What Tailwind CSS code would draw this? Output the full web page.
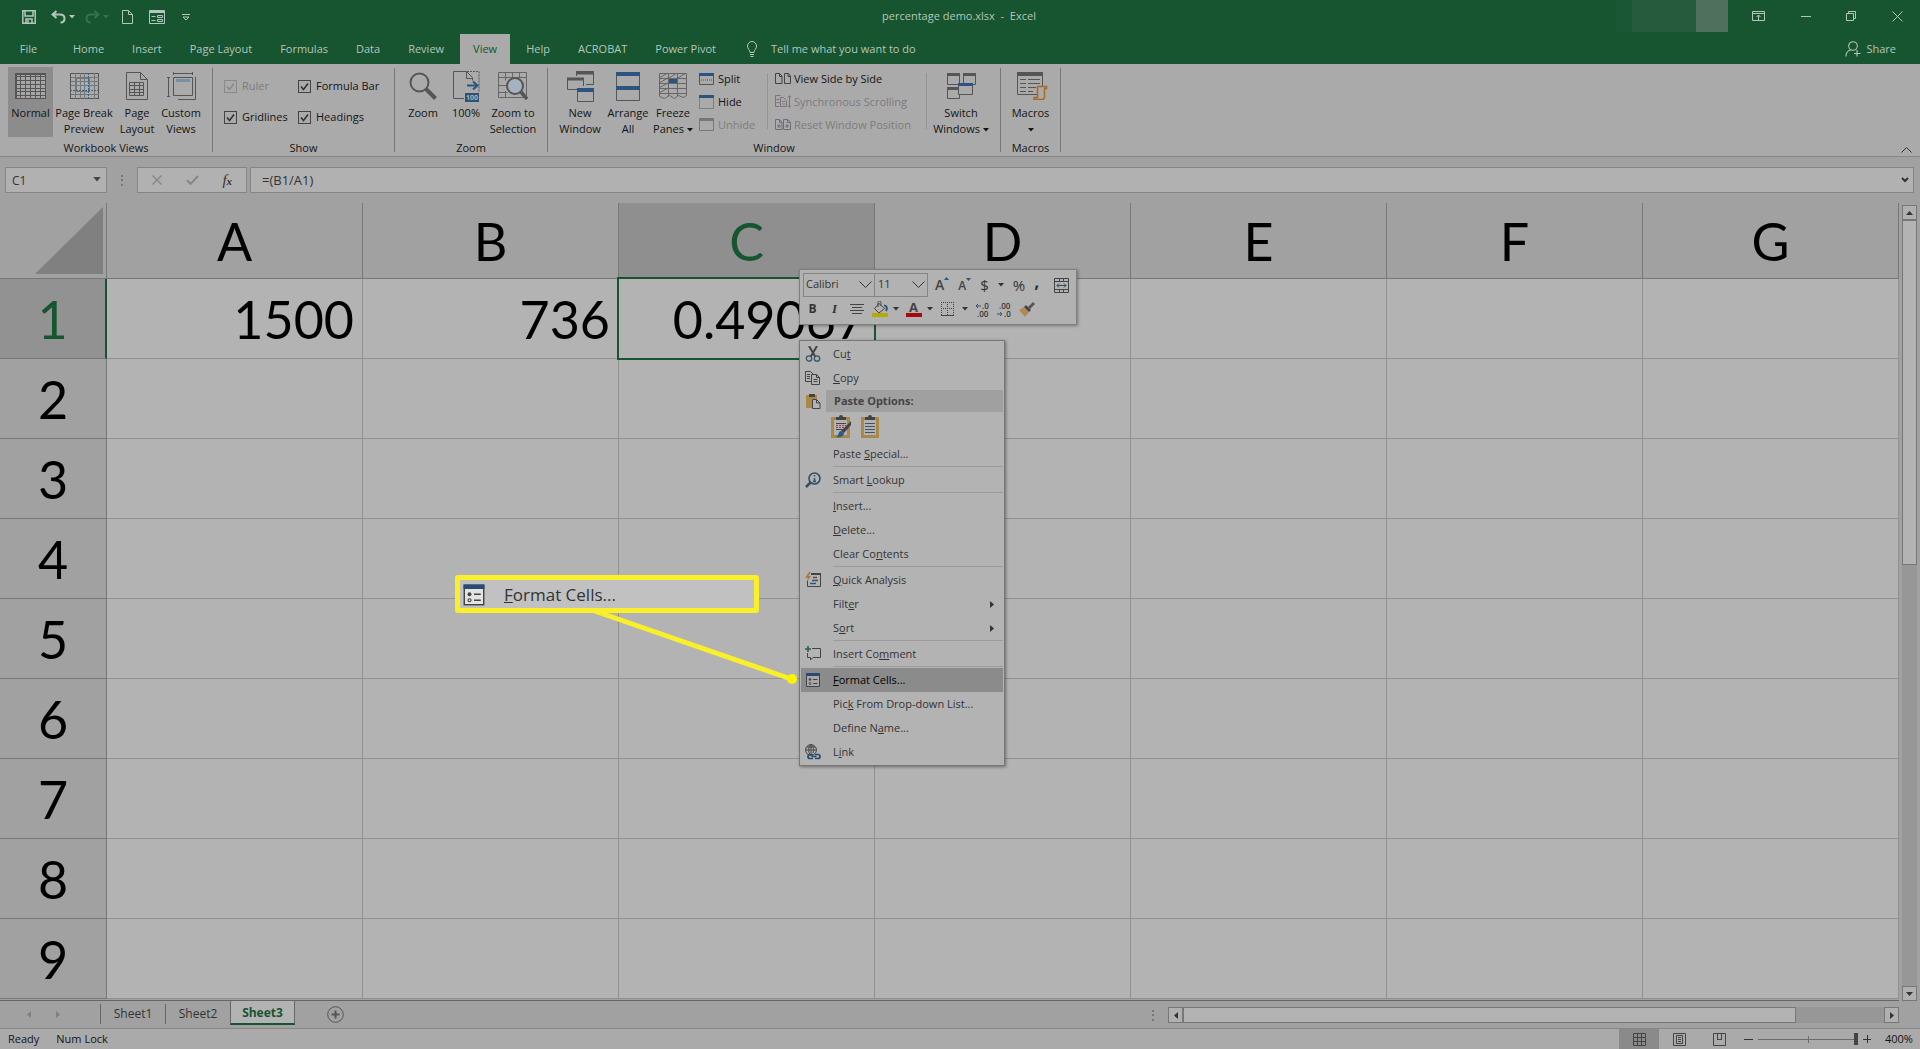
<!DOCTYPE html>
<html lang="en">
<head>
<meta charset="utf-8">
<title>percentage demo.xlsx - Excel</title>
<script src="https://cdn.jsdelivr.net/npm/@tailwindcss/browser@4"></script>
</head>
<body class="relative flex h-screen flex-col overflow-hidden bg-[#a1a1a1] font-['Open_Sans','Noto_Sans',sans-serif] text-[11px] leading-4 text-[#141414]">

<!-- shared symbols -->
<svg class="hidden">
  <symbol id="caret" viewBox="0 0 6 4"><path d="M0 0h6L3 3.5z" fill="currentColor"/></symbol>
  <symbol id="tick" viewBox="0 0 13 13"><path d="M3 6.5l2.5 3L10 3.5" fill="none" stroke="currentColor" stroke-width="1.6"/></symbol>
  <symbol id="format" viewBox="0 0 16 16"><path d="M1.5 1.5h13v13h-13z" fill="none" stroke="#444"/><path d="M1 1h14v3H1z" fill="#2b4a73"/><circle cx="5" cy="7.5" r="1.3" fill="#444"/><circle cx="5" cy="11.5" r="1" fill="none" stroke="#444" stroke-width=".8"/><path d="M8 7.5h4.500M8 11.500h4.500" stroke="#444"/></symbol>
</svg>

<header class="bg-[#175430] text-[#b4c6bb]">
  <div class="flex h-[34px] items-start">
    <div class="flex h-8 flex-1 items-center pl-[22px] pt-[2px]">
      <button aria-label="Save" class="mr-[15px]"><svg class="size-[14px]" viewBox="0 0 14 14" fill="none" stroke="currentColor" stroke-width="1.5"><path d="M.8.8h12.400v12.400H.8z"/><path d="M3 1v5h8V1M4 13V9h6v4"/><path d="M6 10v3" /></svg></button>
      <button aria-label="Undo" class="flex items-center"><svg class="h-[14px] w-[15px]" viewBox="0 0 15 14" fill="none" stroke="currentColor" stroke-width="2"><path d="M5.500 1L1.500 4.500l4 3.500M2 4.500h7c3 0 4.500 1.800 4.500 4s-1.500 4-4 4"/></svg><svg class="ml-[3px] h-1 w-1.5"><use href="#caret"/></svg></button>
      <button aria-label="Redo" disabled class="ml-[10px] flex items-center text-[#37704d]"><svg class="h-[14px] w-[15px]" viewBox="0 0 15 14" fill="none" stroke="currentColor" stroke-width="2"><path d="M9.500 1l4 3.500-4 3.500M13 4.500H6c-3 0-4.500 1.800-4.500 4s1.500 4 4 4"/></svg><svg class="ml-[3px] h-1 w-1.5"><use href="#caret"/></svg></button>
      <button aria-label="New" class="ml-[13px]"><svg class="h-[14px] w-[11px]" viewBox="0 0 11 14" fill="none" stroke="currentColor"><path d="M.5.5h6l4 4v9H.5zM6.500.5v4h4"/></svg></button>
      <button aria-label="Form" class="ml-4"><svg class="h-[14px] w-4" viewBox="0 0 16 14" fill="none" stroke="currentColor"><path d="M.5.5h15v13H.5z"/><path d="M1 2h14" stroke-width="2"/><path d="M2.500 6.500h4M2.500 10.500h4M8.500 5.500h5v2h-5zM8.500 9.500h5v2h-5z"/></svg></button>
      <button aria-label="Customize toolbar" class="ml-[17px]"><svg class="h-[7px] w-[8px]" viewBox="0 0 8 7" fill="none" stroke="currentColor"><path d="M0 .5h8M1 3l3 3 3-3z"/></svg></button>
    </div>
    <div class="flex h-8 items-center whitespace-pre">percentage demo.xlsx  -  Excel</div>
    <div class="flex h-8 flex-1 items-center justify-end pl-6">
      <div class="h-8 w-4 bg-[#1a5734]"></div>
      <div class="h-8 w-16 bg-[#265c3d]"></div>
      <div class="h-8 w-8 bg-[#4f705c]"></div>
      <button aria-label="Ribbon display options" class="grid h-8 w-[60px] place-items-center"><svg class="h-[10px] w-[13px]" viewBox="0 0 13 10" fill="none" stroke="currentColor"><path d="M.5.5h12v9H.5zM.5 2.500h12M6.500 9V4M4.500 6l2-2 2 2"/></svg></button>
      <button aria-label="Minimize" class="grid h-8 w-9 place-items-center"><svg class="h-[10px] w-[10px]" viewBox="0 0 10 10" stroke="currentColor"><path d="M0 5.500h10"/></svg></button>
      <button aria-label="Restore" class="grid h-8 w-[54px] place-items-center"><svg class="size-[10px]" viewBox="0 0 10 10" fill="none" stroke="currentColor"><path d="M.5 2.500h7v7h-7zM2.500 2V.5h7v7H8"/></svg></button>
      <button aria-label="Close" class="mr-1 grid h-8 w-[38px] place-items-center"><svg class="size-[11px]" viewBox="0 0 11 11" stroke="currentColor"><path d="M.5.5l10 10M10.500.5l-10 10"/></svg></button>
    </div>
  </div>
  <nav class="flex h-[30px] items-stretch gap-1 pl-2 whitespace-nowrap">
    <button class="w-[49px] pr-2">File</button>
    <button class="px-3">Home</button>
    <button class="px-3">Insert</button>
    <button class="px-3">Page Layout</button>
    <button class="px-3">Formulas</button>
    <button class="px-3">Data</button>
    <button class="px-3">Review</button>
    <button class="bg-[#aaa] px-[13px] text-[#175430]">View</button>
    <button class="px-3">Help</button>
    <button class="px-3">ACROBAT</button>
    <button class="px-3">Power Pivot</button>
    <button class="ml-[14px] flex items-center gap-[13px]"><svg class="h-4 w-3" viewBox="0 0 12 16" fill="none" stroke="currentColor"><path d="M4 11.500C4 9 1.500 8 1.500 5a4.500 4.500 0 0 1 9 0c0 3-2.500 4-2.500 6.500zM4 13.500h4M4.500 15.500h3"/></svg>Tell me what you want to do</button>
    <button class="mr-6 ml-auto flex items-center gap-[5px]"><svg class="size-4" viewBox="0 0 16 16" fill="none" stroke="currentColor" stroke-width="1.100"><circle cx="8" cy="5" r="4.300"/><path d="M1 15.500c0-3.500 2-6 5-6.700M12 9v6.500M9 12.500h6.500"/></svg>Share</button>
  </nav>
</header>

<!-- ribbon -->
<section class="flex h-[93px] border-b border-[#878787] bg-[#aaa] whitespace-nowrap">
  <div class="flex w-[212px] flex-col pt-[3px] text-center">
    <div class="flex h-[73px] items-start pl-2">
      <button class="h-[70px] w-[45px] bg-[#8c8c8c] pb-4"><span class="grid h-[38px] place-items-center"><svg class="h-[26px] w-[31px]" viewBox="0 0 31 26" fill="none" stroke="#555" shape-rendering="crispEdges"><path d="M1 1h29v24H1z" fill="#a6a6a6"/><path d="M.5.5h30v25H.5zM.5 3.500h30M.5 7.500h30M.5 11.500h30M.5 15.500h30M.5 18.500h30M.5 22.500h30M5.500 0v26M10.500 0v26M15.500 0v26M20.500 0v26M25.500 0v26"/></svg></span>Normal</button>
      <button class="h-[70px] w-[62px]"><span class="grid h-[38px] place-items-center"><svg class="h-[26px] w-[29px]" viewBox="0 0 29 26" fill="none" stroke="#777" shape-rendering="crispEdges"><path d="M6 5h13v13H6z" fill="#9fb0bd"/><path d="M.5.5h28v25H.5z" stroke="#555"/><path d="M.5 4.500h28M.5 8.500h28M.5 12.500h28M.5 21.500h28M5.500 0v26M10.500 0v26M14.500 0v26M24.500 0v26"/><path d="M0 17.500h29M18.500 0v26" stroke="#3c6288" stroke-dasharray="2 1"/></svg></span>Page Break<br>Preview</button>
      <button class="h-[70px] w-[44px]"><span class="grid h-[38px] place-items-center"><svg class="h-[28px] w-[22px]" viewBox="0 0 22 28" fill="none" stroke="#555"><path d="M.5.5h14l7 7v20H.5zM14.500.5v7h7M3.500 10.500h14v13h-14zM3.500 13.500h14M3.500 17.500h14M3.500 20.500h14M8.500 10.500v13M13.500 10.500v13"/></svg></span>Page<br>Layout</button>
      <button class="h-[70px] w-[44px]"><span class="grid h-[38px] place-items-center"><svg class="h-[28px] w-[29px]" viewBox="0 0 29 28" fill="none" stroke="#555"><path d="M6.500 5.500h19v18h-19z"/><path d="M9 8.500h14" stroke="#7b8fa3" stroke-width="3"/><path d="M6 1.500h20M6.500 0v3M25.500 0v3M1.500 6v18M0 5.500h3M0 24.500h3M28.500 5v22.500H11M28.500 8v19"/></svg></span>Custom<br>Views</button>
    </div>
    <div>Workbook Views</div>
  </div>
  <div class="mt-1 h-[84px] w-px bg-[#777]"></div>

  <div class="flex w-[181px] flex-col pt-[3px]">
    <div class="grid h-[73px] grid-cols-[74px_auto] grid-rows-[38px_24px] items-center pl-[11px]">
      <label class="flex items-center gap-[5px] text-[#7c7c7c]"><span class="relative block size-[13px]"><input type="checkbox" checked disabled class="block size-[13px] appearance-none border border-[#8a8a8a]"><svg class="absolute inset-0 size-[13px] text-[#8a8a8a]"><use href="#tick"/></svg></span>Ruler</label>
      <label class="flex items-center gap-[5px]"><span class="relative block size-[13px]"><input type="checkbox" checked class="block size-[13px] appearance-none border border-[#444]"><svg class="pointer-events-none absolute inset-0 size-[13px] text-[#333]"><use href="#tick"/></svg></span>Formula Bar</label>
      <label class="flex items-center gap-[5px]"><span class="relative block size-[13px]"><input type="checkbox" checked class="block size-[13px] appearance-none border border-[#444]"><svg class="pointer-events-none absolute inset-0 size-[13px] text-[#333]"><use href="#tick"/></svg></span>Gridlines</label>
      <label class="flex items-center gap-[5px]"><span class="relative block size-[13px]"><input type="checkbox" checked class="block size-[13px] appearance-none border border-[#444]"><svg class="pointer-events-none absolute inset-0 size-[13px] text-[#333]"><use href="#tick"/></svg></span>Headings</label>
    </div>
    <div class="text-center">Show</div>
  </div>
  <div class="mt-1 h-[84px] w-px bg-[#777]"></div>

  <div class="flex w-[152px] flex-col pt-[3px] text-center">
    <div class="flex h-[73px] items-start pl-[6px]">
      <button class="h-[70px] w-[44px] pb-4"><span class="grid h-[38px] place-items-center"><svg class="size-7" viewBox="0 0 28 28" fill="none" stroke="#555"><circle cx="10.500" cy="10.500" r="9" stroke-width="2"/><path d="M17 17l9.500 9.500" stroke-width="4"/></svg></span>Zoom</button>
      <button class="h-[70px] w-[42px] pb-4"><span class="grid h-[38px] place-items-center"><svg class="h-[31px] w-[27px]" viewBox="0 0 27 31" fill="none" stroke="#555"><path d="M11 27.500H.5V.5h13l6 6v3M13.500.5v7h6"/><path d="M14 .5h12v21" stroke-dasharray="2 1"/><path d="M14 14.500h10M20 10.500l4.500 4-4.500 4" stroke="#2c5480" stroke-width="2"/><path d="M12 22h14v9H12z" fill="#2f5175" stroke="none"/><text x="13" y="29" font-size="7" font-weight="700" fill="#b5b5b5" stroke="none">100</text></svg></span>100%</button>
      <button class="h-[70px] w-[52px]"><span class="grid h-[38px] place-items-center"><svg class="h-[28px] w-[30px]" viewBox="0 0 30 28" fill="none" stroke="#555"><path d="M.5.5h28v25H.5zM.5 5.500h28M.5 13.500h9M.5 20.500h9M7.500.5v8M14.500.5v6M21.500.5v6M7.500 19v7" stroke="#666"/><circle cx="17" cy="14" r="8" fill="#a5b3c0" stroke-width="2"/><path d="M23 20l6 7" stroke-width="3.500"/></svg></span>Zoom to<br>Selection</button>
    </div>
    <div>Zoom</div>
  </div>
  <div class="mt-1 h-[84px] w-px bg-[#777]"></div>

  <div class="flex w-[452px] flex-col pt-[3px]">
    <div class="flex h-[73px] items-start pl-[7px]">
      <button class="h-[70px] w-[50px]"><span class="grid h-[38px] place-items-center"><svg class="h-[31px] w-[27px]" viewBox="0 0 27 31" fill="none" stroke="#555"><path d="M9.500 5V.5h17v13H19"/><path d="M9 2h18" stroke-width="3"/><path d="M10 18.500H.5v-11h16V15"/><path d="M0 8h17" stroke-width="3"/><path d="M10.500 17.500h16v13h-16z"/><path d="M10 19h17" stroke="#2c5480" stroke-width="4"/></svg></span>New<br>Window</button>
      <button class="h-[70px] w-[46px]"><span class="grid h-[38px] place-items-center"><svg class="h-[29px] w-6" viewBox="0 0 24 29" fill="none" stroke="#555"><path d="M.5.5h23v28H.5z"/><path d="M0 2h24M0 16h24" stroke="#2c5480" stroke-width="4"/></svg></span>Arrange<br>All</button>
      <button class="h-[70px] w-[44px]"><span class="grid h-[38px] place-items-center"><svg class="h-[26px] w-7" viewBox="0 0 28 26" fill="none" stroke="#555"><path d="M.5.5h27v22l-3 2-5-2-4 3-5-3-5 3-5-2zM.5 5.500h27M.5 10.500h27M.5 15.500h27M.5 20.500h27M9.500 0v23M18.500 0v23M0 5L9 0M0 10l9-5M0 15l9-5M0 20l9-5M10 5l8-5M19 5l8-5" stroke="#666"/><path d="M10 6h8v4h-8z" fill="#2c5480" stroke="none"/></svg></span>Freeze<br>Panes <svg class="inline h-1 w-1.5"><use href="#caret"/></svg></button>
      <div class="ml-1 flex w-[68px] flex-col">
        <button class="flex h-[23px] items-center gap-1"><svg class="h-3 w-[15px]" viewBox="0 0 15 12" fill="none" stroke="#555"><path d="M.5.5h14v11H.5z"/><path d="M0 1.500h15" stroke="#2c5480" stroke-width="3"/><path d="M2 7h12" stroke-dasharray="1 1"/></svg>Split</button>
        <button class="flex h-[23px] items-center gap-1"><svg class="h-[14px] w-[15px]" viewBox="0 0 15 14" fill="none" stroke="#555"><path d="M.5.5h14v13H.5z" stroke-dasharray="1 1"/><path d="M0 1.500h15" stroke="#2c5480" stroke-width="3"/></svg>Hide</button>
        <button disabled class="flex h-[23px] items-center gap-1 text-[#7c7c7c]"><svg class="h-[13px] w-[15px]" viewBox="0 0 15 13" fill="none" stroke="#777"><path d="M.5.5h14v12H.5z"/><path d="M0 1.500h15" stroke-width="3"/></svg>Unhide</button>
      </div>
      <div class="mt-[6px] h-[56px] w-px bg-[#949494]"></div>
      <div class="flex w-[158px] flex-col pl-[7px]">
        <button class="flex h-[23px] items-center gap-[3px]"><svg class="h-[11px] w-4" viewBox="0 0 16 11" fill="none" stroke="#444"><path d="M.5.5h4l2.500 2.500v7.500H.5zM9.500.5h4l2 2.500v7.500h-6zM4.500.5v3H7M13 .5v3h2.500"/></svg>View Side by Side</button>
        <button disabled class="flex h-[23px] items-center gap-[3px] text-[#7c7c7c]"><svg class="h-[13px] w-4" viewBox="0 0 16 13" fill="none" stroke="#7b727b"><path d="M5.500.5H.5v11h4M5.500 2.500h3l3 3v6h-6zM1.500 4.500h3M1.500 7.500h3M7 6.500h3M7 9h3M14.500 1v11M13 2.500L14.500.7 16 2.500M13 10.500l1.500 1.800 1.500-1.800"/></svg>Synchronous Scrolling</button>
        <button disabled class="flex h-[23px] items-center gap-[3px] text-[#7c7c7c]"><svg class="h-[11px] w-4" viewBox="0 0 16 11" fill="none" stroke="#74697a"><path d="M.5.5h4l2.500 2.500v7.500H.5zM8.500.5h4l3 2.500v7.500h-7zM4.500.5v3H7M12.500.5v3h3M2 7h4M4 5v4M10 7h4M12 5v4"/></svg>Reset Window Position</button>
      </div>
      <div class="mt-[6px] h-[56px] w-px bg-[#949494]"></div>
      <button class="h-[70px] w-[68px]"><span class="grid h-[38px] place-items-center"><svg class="h-[27px] w-[29px]" viewBox="0 0 29 27" fill="none" stroke="#555"><path d="M.5.5h12v11H.5zM16.500.5h12v11h-12zM.5 14.500h12v11H.5z"/><path d="M0 1.500h13M16 1.500h13M0 15.500h13" stroke-width="3"/><path d="M11.500 10.500h14v11h-14z" fill="#aaa"/><path d="M11 11.500h15" stroke="#2c5480" stroke-width="3"/></svg></span>Switch<br>Windows <svg class="inline h-1 w-1.5"><use href="#caret"/></svg></button>
    </div>
    <div class="text-center">Window</div>
  </div>
  <div class="mt-1 h-[84px] w-px bg-[#777]"></div>

  <div class="flex w-[59px] flex-col pt-[3px] text-center">
    <button class="mb-[3px] h-[70px] w-full"><span class="grid h-[38px] place-items-center"><svg class="ml-1 h-[28px] w-[31px]" viewBox="0 0 31 28" fill="none" stroke="#555"><path d="M.5.5h25v22H.5zM3 7.500h6M11 7.500h12M3 11.500h6M11 11.500h12M3 15.500h6M11 15.500h8M3 19.500h6M11 19.500h5"/><path d="M0 2h26" stroke-width="4"/><path d="M20.500 14.500h9v2h-2v8c0 2-1 3-2.500 3h-8v-2h3.500z" fill="#aaa" stroke="#a56a26" stroke-width="1.500"/></svg></span>Macros<br><svg class="inline h-1 w-1.5"><use href="#caret"/></svg></button>
    <div>Macros</div>
  </div>
  <div class="mt-1 h-[84px] w-px bg-[#777]"></div>
  <button aria-label="Collapse the ribbon" class="mt-auto mr-2 mb-[3px] ml-auto"><svg class="h-[6px] w-[11px]" viewBox="0 0 11 6" fill="none" stroke="#333"><path d="M.5 5.500l5-5 5 5"/></svg></button>
</section>

<!-- formula bar -->
<section class="flex h-[46px] items-start pt-[10px] pr-[6px] pl-[5px]">
  <div class="relative h-[26px] w-[102px] border border-[#858585] bg-[#b1b1b1]">
    <input aria-label="Name box" value="C1" class="h-full w-full pl-[6px] text-xs text-[#333] outline-none">
    <svg class="absolute top-[9px] right-[5px] h-[5px] w-2 text-[#444]"><use href="#caret"/></svg>
  </div>
  <div class="flex h-[26px] w-[30px] items-center justify-center"><svg class="h-[11px] w-[2px]" viewBox="0 0 2 11" fill="#777"><path d="M0 0h2v2H0zM0 4h2v2H0zM0 9h2v2H0z"/></svg></div>
  <div class="flex h-[26px] w-[110px] items-center justify-around border border-[#858585] bg-[#b1b1b1] px-[2px]">
    <button aria-label="Cancel"><svg class="size-[10px]" viewBox="0 0 10 10" stroke="#888" stroke-width="1.500"><path d="M.5.5l9 9M9.500.5l-9 9"/></svg></button>
    <button aria-label="Enter"><svg class="h-[10px] w-[13px]" viewBox="0 0 13 10" fill="none" stroke="#888" stroke-width="2"><path d="M1 5l3.500 4L12 1"/></svg></button>
    <button aria-label="Insert function" class="font-['Liberation_Serif',serif] text-[15px] text-[#333] italic">f<span class="text-[11px] font-bold">x</span></button>
  </div>
  <div class="relative ml-[3px] h-[26px] flex-1 border border-[#858585] bg-[#b1b1b1]">
    <input aria-label="Formula" value="=(B1/A1)" class="h-full w-full pl-[11px] text-[13px] text-[#333] outline-none">
    <svg class="absolute top-[9px] right-1 h-[6px] w-2" viewBox="0 0 8 6" fill="none" stroke="#333" stroke-width="2"><path d="M1 1l3 3 3-3"/></svg>
  </div>
</section>

<!-- grid -->
<main class="isolate flex min-h-0 flex-1">
  <div class="min-w-0 flex-1 overflow-hidden border-b border-[#666]">
    <table class="w-full table-fixed border-separate border-spacing-0 font-['Lato','Open_Sans',sans-serif] text-[52px] leading-[60px] text-black [&_tbody_th]:h-20 [&_tbody_th]:border-r [&_tbody_th]:border-b [&_tbody_th]:border-[#777] [&_td]:border-r [&_td]:border-b [&_td]:border-[#919191] [&_td]:bg-[#b3b3b3] [&_td]:p-0 [&_td]:pt-px [&_td]:pr-2 [&_td]:text-right [&_th]:p-0 [&_th]:pt-px [&_th]:font-normal [&_thead_th]:h-[76px] [&_thead_th]:border-r [&_thead_th]:border-b [&_thead_th]:border-[#777]">
      <thead>
        <tr>
          <th class="w-[107px] !pt-0" aria-label="Select all"><svg class="ml-[35px] h-[67px] w-[68px]" viewBox="0 0 68 67"><path d="M68 0v67H0z" fill="#808080"/></svg></th>
          <th>A</th><th>B</th><th class="bg-[#8f8f8f] text-[#175430]">C</th><th>D</th><th>E</th><th>F</th><th>G</th>
        </tr>
      </thead>
      <tbody>
        <tr><th class="bg-[#929292] text-[#175430] !border-r-2 !border-r-[#175430]">1</th><td>1500</td><td>736</td><td class="relative">0.49067<span class="absolute -inset-[2px] border-2 border-[#175430]"></span></td><td></td><td></td><td></td><td></td></tr>
        <tr><th>2</th><td></td><td></td><td></td><td></td><td></td><td></td><td></td></tr>
        <tr><th>3</th><td></td><td></td><td></td><td></td><td></td><td></td><td></td></tr>
        <tr><th>4</th><td></td><td></td><td></td><td></td><td></td><td></td><td></td></tr>
        <tr><th>5</th><td></td><td></td><td></td><td></td><td></td><td></td><td></td></tr>
        <tr><th>6</th><td></td><td></td><td></td><td></td><td></td><td></td><td></td></tr>
        <tr><th>7</th><td></td><td></td><td></td><td></td><td></td><td></td><td></td></tr>
        <tr><th>8</th><td></td><td></td><td></td><td></td><td></td><td></td><td></td></tr>
        <tr><th>9</th><td></td><td></td><td></td><td></td><td></td><td></td><td></td></tr>
      </tbody>
    </table>
  </div>
  <div class="flex w-[21px] flex-col pt-[2px] pr-[3px] pl-[3px]">
    <button aria-label="Scroll up" class="grid h-[15px] place-items-center border border-[#777] bg-[#b0b0b0]"><svg class="h-1 w-[7px]" viewBox="0 0 7 4"><path d="M0 4h7L3.500 0z" fill="#333"/></svg></button>
    <div class="flex-1 bg-[#979797]"><div class="h-[45%] border border-[#777] bg-[#b3b3b3]"></div></div>
    <button aria-label="Scroll down" class="grid h-[15px] place-items-center border border-[#777] bg-[#b0b0b0]"><svg class="h-1 w-[7px]" viewBox="0 0 7 4"><path d="M0 0h7L3.500 4z" fill="#333"/></svg></button>
  </div>
</main>

<!-- sheet tabs -->
<section class="flex h-[27px] items-start text-xs text-[#333]">
  <div class="flex h-[27px] w-[100px] items-center gap-[25px] pl-[27px]">
    <button aria-label="Previous sheet"><svg class="h-[7px] w-1" viewBox="0 0 4 7"><path d="M4 0v7L0 3.500z" fill="#808080"/></svg></button>
    <button aria-label="Next sheet"><svg class="h-[7px] w-1" viewBox="0 0 4 7"><path d="M0 0v7l4-3.500z" fill="#808080"/></svg></button>
  </div>
  <button class="mt-[3px] h-5 w-[65px] border-l border-[#666]">Sheet1</button>
  <button class="mt-[3px] h-5 w-[65px] border-l border-[#666]">Sheet2</button>
  <button class="-mt-px h-[25px] w-[65px] border-x border-b-2 border-[#666] border-b-[#175430] bg-[#b3b3b3] pt-[2px] font-bold text-[#175430]">Sheet3</button>
  <button aria-label="New sheet" class="mt-[5px] ml-[32px]"><svg class="size-[17px]" viewBox="0 0 17 17" fill="none" stroke="#555"><circle cx="8.500" cy="8.500" r="7.800"/><path d="M8.500 4.500v8M4.500 8.500h8" stroke-width="2"/></svg></button>
  <div class="mt-[6px] mr-[21px] ml-auto flex h-4 w-[39%] max-w-[747px] items-center">
    <svg class="mr-[14px] h-[11px] w-[2px]" viewBox="0 0 2 11" fill="#777"><path d="M0 0h2v2H0zM0 4h2v2H0zM0 9h2v2H0z"/></svg>
    <button aria-label="Scroll left" class="grid h-4 w-[15px] place-items-center border border-[#777] bg-[#b0b0b0]"><svg class="h-[7px] w-1" viewBox="0 0 4 7"><path d="M4 0v7L0 3.500z" fill="#333"/></svg></button>
    <div class="h-4 flex-1 bg-[#979797]"><div class="h-4 w-7/8 border border-[#777] bg-[#b3b3b3]"></div></div>
    <button aria-label="Scroll right" class="grid h-4 w-[15px] place-items-center border border-[#777] bg-[#b0b0b0]"><svg class="h-[7px] w-1" viewBox="0 0 4 7"><path d="M0 0v7l4-3.500z" fill="#333"/></svg></button>
  </div>
</section>

<!-- status bar -->
<footer class="flex h-[21px] items-center border-t border-[#878787] bg-[#aaa] pl-2">
  <span>Ready</span><span class="ml-[17px]">Num Lock</span>
  <button aria-label="Normal view" class="ml-auto grid h-full w-10 place-items-center bg-[#8a8a8a]"><svg class="size-[13px]" viewBox="0 0 13 13" fill="none" stroke="#444"><path d="M.5.5h12v12H.5zM4.500 0v13M8.500 0v13M0 4.500h13M0 8.500h13"/></svg></button>
  <button aria-label="Page layout view" class="grid h-full w-10 place-items-center"><svg class="size-[13px]" viewBox="0 0 13 13" fill="none" stroke="#444"><path d="M.5.5h12v12H.5zM3.500 2.500h6v8h-6zM5 4.500h3M5 6.500h3M5 8.500h3"/></svg></button>
  <button aria-label="Page break preview" class="grid h-full w-10 place-items-center"><svg class="size-[13px]" viewBox="0 0 13 13" fill="none" stroke="#444"><path d="M.5.5h12v12H.5zM4.500 0v6.500M8.500 0v6.500M4 6.500h5"/></svg></button>
  <button aria-label="Zoom out" class="ml-[5px]"><svg class="h-[9px] w-[9px]" viewBox="0 0 9 9" stroke="#333"><path d="M0 4.500h9"/></svg></button>
  <div class="relative ml-[5px] flex h-4 w-[100px] items-center">
    <span class="absolute inset-x-0 top-[8px] h-px bg-[#6c6c6c]"></span><span class="absolute top-[5px] left-1/2 h-[7px] w-px bg-[#6c6c6c]"></span>
    <input aria-label="Zoom" type="range" min="10" max="400" value="400" class="relative h-4 w-full appearance-none bg-transparent [&::-webkit-slider-thumb]:h-3 [&::-webkit-slider-thumb]:w-1 [&::-webkit-slider-thumb]:appearance-none [&::-webkit-slider-thumb]:bg-[#444]">
  </div>
  <button aria-label="Zoom in" class="ml-[5px]"><svg class="size-[8px]" viewBox="0 0 8 8" stroke="#333"><path d="M0 4.500h8M4.500 0v8"/></svg></button>
  <button class="w-[49px] pl-[14px] text-left">400%</button>
</footer>

<!-- mini toolbar -->
<div class="absolute top-[269px] left-[799px] flex h-[56px] w-[278px] flex-col border border-[#808080] bg-[#b2b2b2] text-[#333] shadow-[1px_1px_3px_#0005]">
  <div class="flex h-[30px] items-center pl-[3px]">
    <div class="relative"><select aria-label="Font" class="block h-6 w-[72px] appearance-none border border-[#858585] pb-[2px] pl-[2px] text-[11px]"><option>Calibri</option></select><svg class="pointer-events-none absolute top-2 right-[3px] h-[7px] w-[13px]" viewBox="0 0 13 7" fill="none" stroke="#333"><path d="M.5.5l6 6 6-6"/></svg></div>
    <div class="relative"><select aria-label="Font size" class="-ml-px block h-6 w-[54px] appearance-none border border-[#858585] pb-[2px] pl-[3px] text-[11px]"><option>11</option></select><svg class="pointer-events-none absolute top-2 right-[3px] h-[7px] w-[13px]" viewBox="0 0 13 7" fill="none" stroke="#333"><path d="M.5.5l6 6 6-6"/></svg></div>
    <button aria-label="Grow font" class="ml-[7px] flex items-start text-[14px] font-semibold text-[#444]">A<svg class="h-[3px] w-[5px]" viewBox="0 0 5 3"><path d="M0 3h5L2.500 0z" fill="#2c5480"/></svg></button>
    <button aria-label="Shrink font" class="ml-[9px] flex items-start pt-px text-xs font-semibold text-[#444]">A<svg class="h-[3px] w-[5px]" viewBox="0 0 5 3"><path d="M0 0h5L2.500 3z" fill="#2c5480"/></svg></button>
    <button aria-label="Accounting format" class="ml-[9px] flex items-center gap-[9px] text-[15px]">$<svg class="h-1 w-1.5"><use href="#caret"/></svg></button>
    <button aria-label="Percent" class="ml-[9px] text-[15px]">%</button>
    <button aria-label="Comma style" class="ml-[9px] pb-2 text-[18px] leading-3 font-bold">,</button>
    <button aria-label="Merge" class="mr-[7px] ml-auto"><svg class="size-[15px]" viewBox="0 0 15 15" fill="none" stroke="#444"><path d="M.5.5h14v14H.5zM.5 3.500h14M.5 11.500h14M5.500.5v3M9.500.5v3M5.500 11.500v3M9.500 11.500v3"/><path d="M3 7.500h9M5 5.500l-2 2 2 2M10 5.500l2 2-2 2" stroke="#2c4a66"/></svg></button>
  </div>
  <div class="flex h-[18px] items-center pl-2">
    <button class="w-[9px] text-xs font-bold">B</button>
    <button class="ml-[14px] w-[7px] font-['Liberation_Serif',serif] text-[13px] font-bold italic">I</button>
    <button aria-label="Center" class="ml-[12px]"><svg class="h-[11px] w-[14px]" viewBox="0 0 14 11" stroke="#444"><path d="M0 .5h14M2 3.500h10M0 6.500h14M2 9.500h10"/></svg></button>
    <button aria-label="Fill color" class="ml-[8px] flex items-center gap-[5px]"><svg class="size-4" viewBox="0 0 16 16" fill="none" stroke="#444"><path d="M7 2.500l5.500 5L7 12 2.500 7.500zM6 6V1.500a1.500 1.500 0 0 1 3 0V5"/><path d="M12 4.500c3 0 3.500 3 2 5.500" stroke="#2c5480" stroke-width="2"/><path d="M0 12h16v4H0z" fill="#b3ac00" stroke="none"/></svg><svg class="h-1 w-1.5"><use href="#caret"/></svg></button>
    <button aria-label="Font color" class="ml-[7px] flex items-center gap-[5px]"><svg class="size-4" viewBox="0 0 16 16"><text x="3" y="11" font-size="13" font-weight="700" fill="#444">A</text><path d="M0 12h16v4H0z" fill="#a50b0b"/></svg><svg class="h-1 w-1.5"><use href="#caret"/></svg></button>
    <button aria-label="Borders" class="ml-[8px] flex items-center gap-[7px]"><svg class="size-[14px]" viewBox="0 0 14 14" fill="none" stroke="#444"><path d="M.5 0v13M6.500 0v13M12.500 0v13M0 .5h13M0 6.500h13" stroke-dasharray="1 1"/><path d="M0 13.500h13"/></svg><svg class="h-1 w-1.5"><use href="#caret"/></svg></button>
    <button aria-label="Increase decimal" class="ml-[7px]"><svg class="h-[15px] w-[15px]" viewBox="0 0 15 15" font-size="8" font-weight="600" fill="#333"><text x="7" y="7">.0</text><text x="2" y="15">.00</text><path d="M1 4h5M3 2L1 4l2 2" fill="none" stroke="#2c5480"/></svg></button>
    <button aria-label="Decrease decimal" class="ml-[7px]"><svg class="h-[15px] w-[15px]" viewBox="0 0 15 15" font-size="8" font-weight="600" fill="#333"><text x="2" y="7">.00</text><text x="7" y="15">.0</text><path d="M0 12h5M3 10l2 2-2 2" fill="none" stroke="#2c5480"/></svg></button>
    <button aria-label="Format painter" class="ml-[7px]"><svg class="size-4" viewBox="0 0 16 16"><path d="M0 9l5-3 5 5-4 5z" fill="#b08a50"/><path d="M5 6l2-2 5 5-2 2z" fill="#444"/><path d="M9 6l5-5 2 2-5 5z" fill="#555"/></svg></button>
  </div>
</div>

<!-- context menu -->
<div role="menu" class="absolute top-[340px] left-[799px] flex w-[206px] flex-col border border-[#777] bg-[#b3b3b3] p-px text-[#333] shadow-[1px_1px_3px_#0006] [&_button]:grid [&_button]:h-6 [&_button]:grid-cols-[32px_1fr_16px] [&_button]:items-center [&_button]:text-left [&_button>svg]:ml-1 [&_button>svg]:size-4 [&_hr]:ml-8 [&_hr]:h-[2px] [&_hr]:border-0 [&_hr]:bg-[#9c9c9c] [&_hr]:bg-clip-content [&_hr]:pb-px">
  <button><svg viewBox="0 0 16 16" fill="none" stroke="#444"><path d="M4 0l6.500 11M12 0L5.500 11" stroke-width="2"/><circle cx="4" cy="12.500" r="2.700" stroke="#35566b" stroke-width="1.300"/><circle cx="12" cy="12.500" r="2.700" stroke="#35566b" stroke-width="1.300"/></svg><span>Cu<u>t</u></span></button>
  <button><svg viewBox="0 0 16 16" fill="none" stroke="#444"><path d="M6 11.500H.5V1.500h5l3 3M2 4.500h3M2 6.500h3M2 8.500h3M6.500 4.500h5l3 3v7h-8zM11.500 4.500v3h3M8.500 9.500h4M8.500 11.500h4"/></svg><span><u>C</u>opy</span></button>
  <div class="grid h-[22px] grid-cols-[25px_1fr] items-center"><svg class="ml-1 size-4" viewBox="0 0 16 16" fill="none"><path d="M1 2h11v13H1z" fill="#ab8748"/><path d="M4 1h6v3H4z" fill="#444"/><path d="M7 6h6l3 3v7H7z" fill="#b3b3b3"/><path d="M7.500 6.500h4l3.500 3.500v5.500H7.500zM11.500 6.500V10H15" stroke="#444"/></svg><div class="flex h-full items-center bg-[#a0a0a0] pl-2 font-bold text-[#444]">Paste Options:</div></div>
  <div class="flex h-[30px] items-center gap-2 pl-[30px] [&_button]:!block [&_button>svg]:!ml-0 [&_button>svg]:!h-6 [&_button>svg]:!w-[21px]">
    <button aria-label="Keep source formatting"><svg viewBox="0 0 21 24" fill="none"><path d="M1.500 3.500h16v18h-16z" fill="#b3b3b3" stroke="#ab8748" stroke-width="3"/><path d="M5 5V2h3a2 2 0 0 1 4 0h3v3z" fill="#444"/><path d="M5 8.500h10M5 14.500h8" stroke="#444"/><path d="M5 10.500h10M5 12.500h9" stroke="#91404c" stroke-dasharray="2 1"/><path d="M20 6v4l-7 8-3-2z" fill="#444"/><path d="M5 22c3 1 8 0 8-4l-3-2c-3 0-2 5-5 6z" fill="#2c5b8c"/></svg></button>
    <button aria-label="Paste values"><svg viewBox="0 0 21 24" fill="none"><path d="M2.500 3.500h15v18h-15z" fill="#b3b3b3" stroke="#ab8748" stroke-width="3"/><path d="M5 5V2h3a2 2 0 0 1 4 0h3v3z" fill="#444"/><path d="M5 8.500h10M5 11.500h10M5 14.500h10M5 17.500h10" stroke="#3b5570"/></svg></button>
  </div>
  <button><i></i><span>Paste <u>S</u>pecial...</span></button>
  <hr>
  <button><svg viewBox="0 0 16 16" fill="none" stroke="#2f5068"><circle cx="9.500" cy="6.500" r="5.500" stroke-width="1.600"/><path d="M5.500 10.500L1 15" stroke-width="2.500"/><path d="M9.500 3v1.500M9.500 6v4M8 9.500h3" stroke-width="1.500"/></svg><span>Smart <u>L</u>ookup</span></button>
  <hr>
  <button><i></i><span><u>I</u>nsert...</span></button>
  <button><i></i><span><u>D</u>elete...</span></button>
  <button><i></i><span>Clear Co<u>n</u>tents</span></button>
  <hr>
  <button><svg viewBox="0 0 16 16" fill="none" stroke="#444"><path d="M6 1.500h9.500v13h-13V9"/><path d="M6 2h10" stroke-width="2"/><path d="M8 5.500h4" stroke="#883c3c" stroke-width="1.500"/><path d="M7 8.500h6M5 11.500h6" stroke="#2c5480" stroke-width="1.500"/><path d="M4 0L0 6h3l-2 5 5-7H3.500L6 0z" fill="#a57c45" stroke="none"/></svg><span><u>Q</u>uick Analysis</span></button>
  <button><i></i><span>Filt<u>e</u>r</span><svg class="!ml-[3px] !h-[7px] !w-1" viewBox="0 0 4 7"><path d="M0 0v7l4-3.500z" fill="#333"/></svg></button>
  <button><i></i><span>S<u>o</u>rt</span><svg class="!ml-[3px] !h-[7px] !w-1" viewBox="0 0 4 7"><path d="M0 0v7l4-3.500z" fill="#333"/></svg></button>
  <hr>
  <button><svg viewBox="0 0 16 16" fill="none" stroke="#444"><path d="M7 2.500h8.500v9H8L5.500 14v-2.500h-3V7"/><path d="M3 0v6M0 3h6" stroke="#2b6152" stroke-width="1.600"/></svg><span>Insert Co<u>m</u>ment</span></button>
  <hr>
  <button class="bg-[#8b8b8b] text-black"><svg viewBox="0 0 16 16"><path d="M1 1h14v14H1z" fill="#a8a8a8"/><use href="#format" width="16" height="16"/></svg><span><u>F</u>ormat Cells...</span></button>
  <button><i></i><span>Pic<u>k</u> From Drop-down List...</span></button>
  <button><i></i><span>Define N<u>a</u>me...</span></button>
  <button><svg viewBox="0 0 16 16" fill="none" stroke="#444"><circle cx="6" cy="6" r="5.400"/><path d="M.5 6h11M6 .5v9M2 3h8M6 .5C3 3 3 8 5 10M6 .5C9 3 9 6 8 9"/><path d="M8 10.500H5a2 2 0 0 0 0 4h3M10 10.500h3a2 2 0 0 1 0 4h-3M6.500 12.500h5" stroke="#264d70" stroke-width="1.700"/></svg><span>L<u>i</u>nk</span></button>
</div>

<!-- callout -->
<svg class="pointer-events-none absolute top-[600px] left-[580px] h-[90px] w-[220px]" viewBox="0 0 220 90"><path d="M6 8l205 71" stroke="#f9f02b" stroke-width="5"/><circle cx="212" cy="79" r="5" fill="#fbf500"/></svg>
<div class="absolute top-[575px] left-[455px] flex h-[38px] w-[304px] items-center rounded-[3px] border-[5px] border-[#f9f02b] bg-[#c1c1c1] pt-[2px] pl-[2px] text-[17px] text-[#333]">
  <svg class="mr-[18px] size-6" viewBox="0 0 16 16"><path d="M1 1h14v14H1z" fill="#e3e3e3"/><use href="#format" width="16" height="16"/></svg><span><u>F</u>ormat Cells...</span>
</div>
</body>
</html>
